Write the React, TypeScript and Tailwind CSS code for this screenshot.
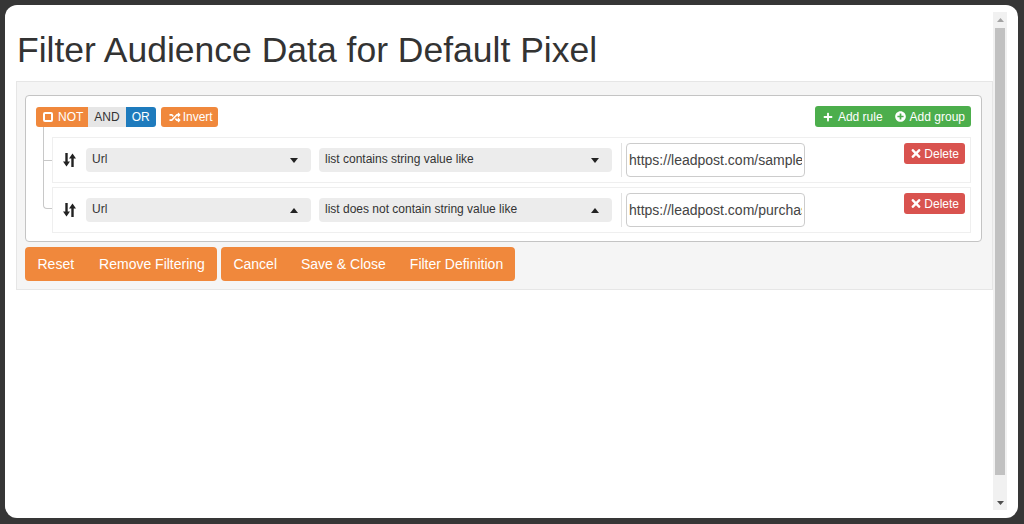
import { FaPlus, FaPlusCircle, FaRandom, FaTimes } from 'react-icons/fa';

const rules = [
  { field: 'Url', operator: 'list contains string value like', value: 'https://leadpost.com/sample', open: false },
  { field: 'Url', operator: 'list does not contain string value like', value: 'https://leadpost.com/purchase-complete', open: true },
];

const SortIcon = () => (
  <svg width="13" height="14" viewBox="0 0 13 14">
    <path d="M3.5 0v9" stroke="#222" strokeWidth="2.4" />
    <path d="M0 8.5h7L3.5 13.5z" fill="#222" />
    <path d="M9.5 14V5" stroke="#222" strokeWidth="2.4" />
    <path d="M6 5.5h7L9.5 0.5z" fill="#222" />
  </svg>
);

const Caret = ({ up }: { up?: boolean }) => (
  <svg width="8" height="5" viewBox="0 0 8 5">
    <path d={up ? 'M0 5h8L4 0z' : 'M0 0h8L4 5z'} fill="#222" />
  </svg>
);

const Select = ({ label, up, className }: { label: string; up?: boolean; className: string }) => (
  <div className={`flex h-[24px] items-center justify-between rounded-[4px] bg-[#ececec] pl-[6px] pr-[13px] text-[12px] text-[#333] ${className}`}>
    <span className="-mt-[3px]">{label}</span>
    <Caret up={up} />
  </div>
);

const RuleRow = ({ rule, last }: { rule: (typeof rules)[number]; last: boolean }) => (
  <div className="relative flex h-[46px] items-center border border-[#efefef] bg-white py-[5px] pl-[10px] pr-[5px]">
    {/* tree connectors */}
    <span
      className={`absolute left-[-10px] w-[9px] border-b border-l border-[#c8c8c8] ${
        last ? 'top-[-5px] h-[26px] rounded-bl-[4px]' : 'top-[-11px] h-[34px]'
      }`}
    />
    {!last && <span className="absolute left-[-10px] top-[22px] h-[28px] w-[9px] border-l border-[#c8c8c8]" />}
    <SortIcon />
    <Select label={rule.field} up={rule.open} className="ml-[10px] w-[225px]" />
    <Select label={rule.operator} up={rule.open} className="ml-[8px] w-[293px]" />
    <div className="ml-[9px] h-[34px] w-px bg-[#e2e2e2]" />
    <input
      readOnly
      value={rule.value}
      className="ml-[4px] h-[34px] w-[179px] rounded-[4px] border border-[#ccc] bg-white px-[2px] text-[14px] text-[#444] outline-none"
    />
    <div className="flex-1" />
    <button className="flex h-[21px] items-center gap-[3px] self-start rounded-[3px] bg-[#d9534f] pl-[7px] pr-[6px] text-[12px] text-white">
      <FaTimes className="h-[13px] w-[10px]" />
      Delete
    </button>
  </div>
);

const App = () => {
  return (
    <div className="h-[524px] w-[1024px] overflow-hidden bg-[#363636] pl-[5px] pt-[5px] font-['Liberation_Sans',Arial,sans-serif]">
      <div className="flex h-[513px] w-[1013px] rounded-[12px] bg-white pb-[8px] pl-[11px] pr-[11px] pt-[7px]">
        <div className="min-w-0 flex-1">
          <h1 className="mb-[11px] mt-[19px] pl-[1px] text-[35.5px] leading-[39px] text-[#333]">
            Filter Audience Data for Default Pixel
          </h1>

          <div className="border border-[#e6e6e6] bg-[#f5f5f5] pb-[8px] pl-[8px] pr-[10px] pt-[13px]">
            <div className="rounded-[4px] border border-[#c4c4c4] bg-white px-[10px] pb-[8px] pt-[10px]">
              <div className="flex h-[21px] items-end justify-between">
                <div className="flex items-center">
                  <div className="flex h-[20px] overflow-hidden rounded-[3px] text-[12px]">
                    <span className="flex items-center gap-[5px] bg-[#f0883c] pl-[7px] pr-[5px] text-white">
                      <span className="h-[10px] w-[10px] rounded-[2px] border-2 border-white" />
                      NOT
                    </span>
                    <span className="flex items-center bg-[#e6e6e6] px-[6px] text-[#333]">AND</span>
                    <span className="flex items-center bg-[#1e7bbd] px-[6px] text-white">OR</span>
                  </div>
                  <span className="ml-[5px] flex h-[20px] items-center gap-[2px] rounded-[3px] bg-[#f0883c] pl-[8px] pr-[5px] text-[12px] text-white">
                    <FaRandom className="h-[11px] w-[12px]" />
                    Invert
                  </span>
                </div>
                <div className="flex h-[21px] items-center rounded-[3px] bg-[#4cae4c] text-[12px] text-white">
                  <span className="flex items-center gap-[5px] pl-[8px] pr-[6px]">
                    <FaPlus className="h-[10px] w-[10px]" />
                    Add rule
                  </span>
                  <span className="flex items-center gap-[4px] pl-[6px] pr-[6px]">
                    <FaPlusCircle className="h-[11px] w-[11px]" />
                    Add group
                  </span>
                </div>
              </div>

              <div className="ml-[16px] mt-[10px] flex flex-col gap-[4px]">
                {rules.map((rule, i) => (
                  <RuleRow key={i} rule={rule} last={i === rules.length - 1} />
                ))}
              </div>
            </div>

            <div className="mt-[5px] flex gap-[4px] text-[14px] leading-[20px] text-white">
              <div className="flex h-[34px] overflow-hidden rounded-[4px] bg-[#f0883c]">
                <span className="flex items-center px-[12.5px]">Reset</span>
                <span className="flex items-center px-[12.5px]">Remove Filtering</span>
              </div>
              <div className="flex h-[34px] overflow-hidden rounded-[4px] bg-[#f0883c]">
                <span className="flex items-center px-[12px]">Cancel</span>
                <span className="flex items-center px-[12px]">Save &amp; Close</span>
                <span className="flex items-center px-[12px]">Filter Definition</span>
              </div>
            </div>
          </div>
        </div>

        {/* scrollbar */}
        <div className="flex w-[14px] flex-col bg-[#f1f1f1]">
          <div className="flex h-[15px] items-center justify-center">
            <svg width="7" height="4" viewBox="0 0 7 4">
              <path d="M0 4h7L3.5 0z" fill="#a3a3a3" />
            </svg>
          </div>
          <div className="mx-[2px] mt-[1px] h-[447px] bg-[#c1c1c1]" />
          <div className="flex-1" />
          <div className="flex h-[15px] items-center justify-center">
            <svg width="7" height="4" viewBox="0 0 7 4">
              <path d="M0 0h7L3.5 4z" fill="#505050" />
            </svg>
          </div>
        </div>
      </div>
    </div>
  );
};

export default App;
